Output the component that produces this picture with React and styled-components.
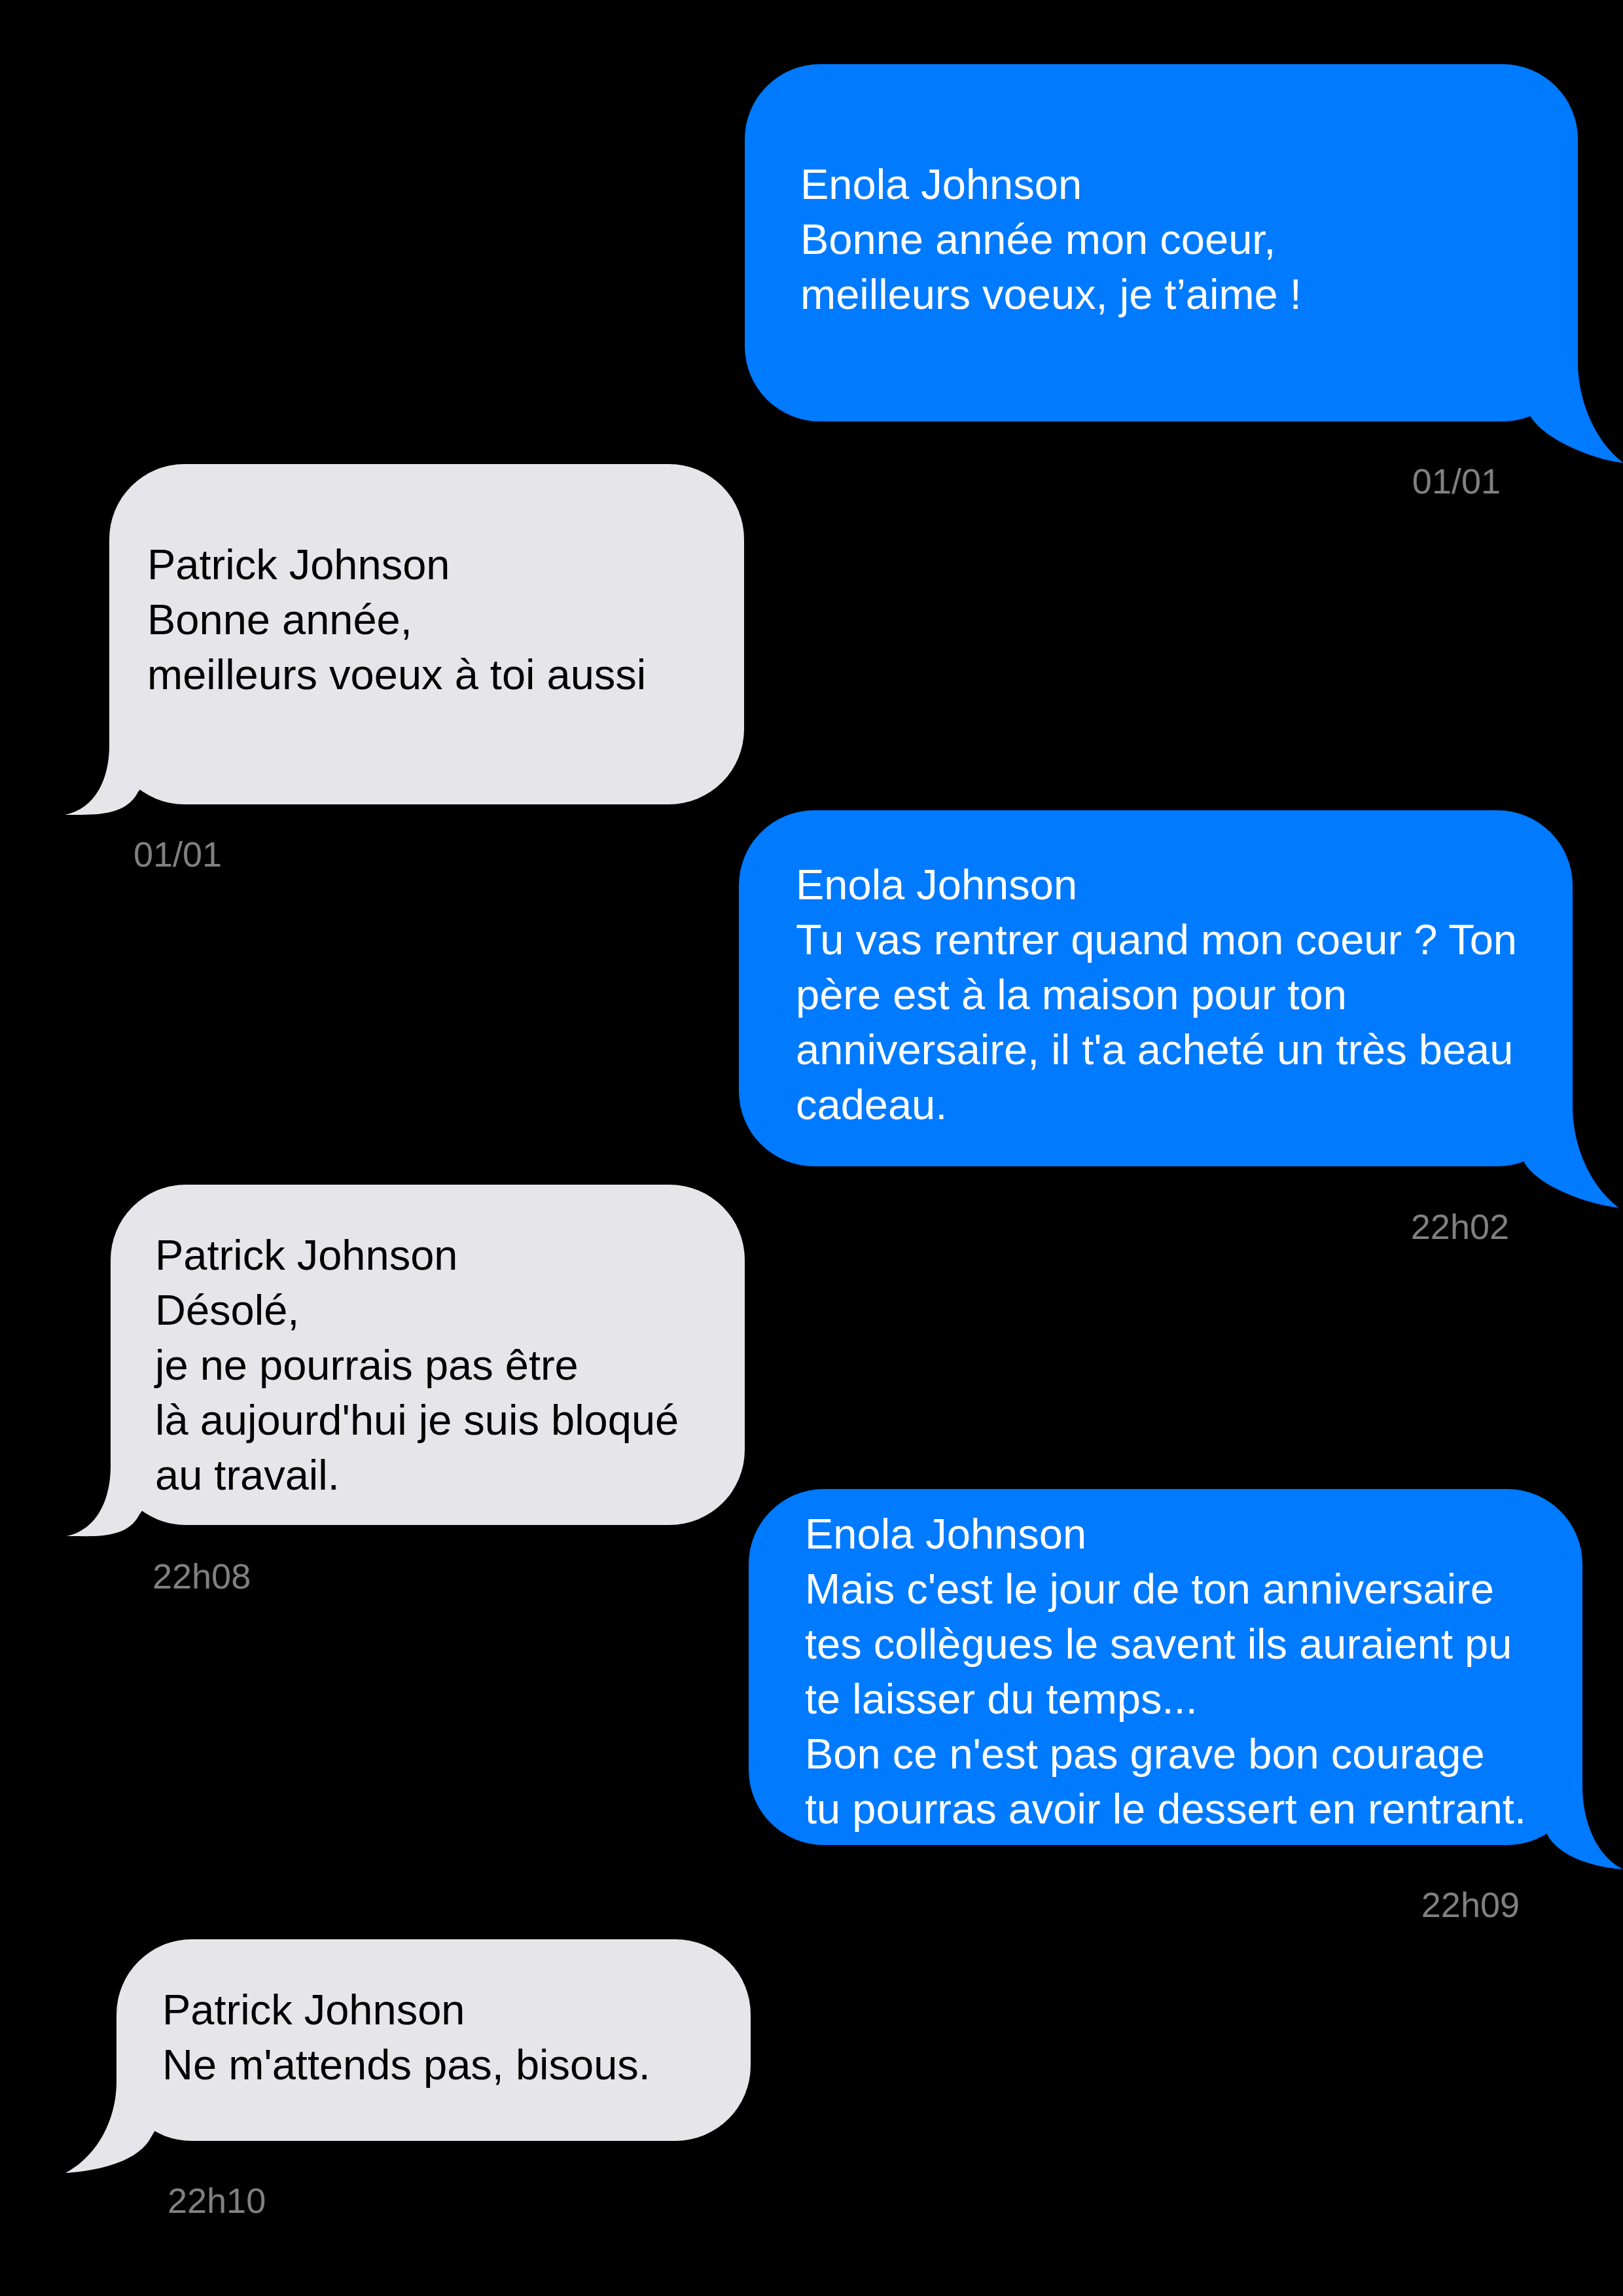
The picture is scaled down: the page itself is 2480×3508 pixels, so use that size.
import React from 'react';
import styled, { createGlobalStyle } from 'styled-components';

const GlobalStyle = createGlobalStyle`
  html, body {
    margin: 0;
    padding: 0;
    background: #000;
  }
`;

const Thread = styled.div`
  display: flex;
  flex-direction: column;
  box-sizing: border-box;
  width: 2480px;
  min-height: 3508px;
  padding-top: 98px;
  background: #000;
  font-family: "Liberation Sans", Arial, sans-serif;
`;

const Message = styled.div`
  display: flex;
  flex-direction: column;
  align-self: ${(p) => (p.$out ? 'flex-end' : 'flex-start')};
  align-items: ${(p) => (p.$out ? 'flex-end' : 'flex-start')};
  margin-top: ${(p) => p.$top}px;
  ${(p) => (p.$out ? `margin-right: ${p.$edge}px;` : `margin-left: ${p.$edge}px;`)}
`;

const Bubble = styled.div`
  position: relative;
  z-index: 0;
  box-sizing: border-box;
  width: ${(p) => p.$w}px;
  height: ${(p) => p.$h}px;
  padding: ${(p) => p.$pt}px 0 0 ${(p) => p.$pl}px;
  border-radius: 115px;
  background: ${(p) => (p.$out ? '#007aff' : '#e5e5ea')};
  color: ${(p) => (p.$out ? '#ffffff' : '#000000')};
  font-size: 65px;
  line-height: 84px;
  white-space: nowrap;
`;

const Line = styled.div``;

const Tail = styled.svg`
  position: absolute;
  z-index: -1;
  bottom: -80px;
  width: 220px;
  height: 200px;
  overflow: visible;
  ${(p) => (p.$out ? 'right: -100px;' : 'left: -100px; transform: scaleX(-1);')}
  path {
    fill: ${(p) => (p.$out ? '#007aff' : '#e5e5ea')};
  }
`;

const Time = styled.div`
  margin-top: ${(p) => p.$gap}px;
  ${(p) => (p.$out ? `margin-right: ${p.$inset}px;` : `margin-left: ${p.$inset}px;`)}
  font-size: 54px;
  line-height: 54px;
  color: #808080;
`;

// tail drawn around the bubble's bottom corner, tip and join relative to that corner
function tailPath([tx, ty], [jx, jy]) {
  const r = (n) => Math.round(n * 10) / 10;
  return [
    'M -120 -120 L 0 -120 L 0 -90',
    `C 0 -40 ${r(tx * 0.3)} ${r(ty * 0.4)} ${tx} ${ty}`,
    `C ${r(tx * 0.45)} ${r(ty * 0.95)} ${jx + 20} ${jy + 40} ${jx} ${jy}`,
    'L -120 -120 Z',
  ].join(' ');
}

const messages = [
  {
    out: true, top: 0, edge: 69, w: 1273, h: 546, pt: 142, pl: 85,
    tip: [69, 63], join: [-74, -11], gap: 64, inset: 118, time: '01/01',
    lines: ['Enola Johnson', 'Bonne année mon coeur,', 'meilleurs voeux, je t’aime !'],
  },
  {
    out: false, top: -53, edge: 167, w: 970, h: 520, pt: 112, pl: 58,
    tip: [68, 16], join: [-44, -19], gap: 49, inset: 37, time: '01/01',
    lines: ['Patrick Johnson', 'Bonne année,', 'meilleurs voeux à toi aussi'],
  },
  {
    out: true, top: -94, edge: 77, w: 1274, h: 544, pt: 72, pl: 87,
    tip: [70, 63], join: [-75, -8], gap: 65, inset: 97, time: '22h02',
    lines: [
      'Enola Johnson',
      'Tu vas rentrer quand mon coeur ? Ton',
      'père est à la maison pour ton',
      "anniversaire, il t'a acheté un très beau",
      'cadeau.',
    ],
  },
  {
    out: false, top: -91, edge: 169, w: 969, h: 520, pt: 66, pl: 68,
    tip: [67, 17], join: [-44, -16], gap: 51, inset: 64, time: '22h08',
    lines: [
      'Patrick Johnson',
      'Désolé,',
      'je ne pourrais pas être',
      "là aujourd'hui je suis bloqué",
      'au travail.',
    ],
  },
  {
    out: true, top: -160, edge: 62, w: 1274, h: 544, pt: 27, pl: 86,
    tip: [62, 37], join: [-55, -18], gap: 64, inset: 96, time: '22h09',
    lines: [
      'Enola Johnson',
      "Mais c'est le jour de ton anniversaire",
      'tes collègues le savent ils auraient pu',
      'te laisser du temps...',
      "Bon ce n'est pas grave bon courage",
      'tu pourras avoir le dessert en rentrant.',
    ],
  },
  {
    out: false, top: 26, edge: 178, w: 969, h: 308, pt: 66, pl: 70,
    tip: [78, 49], join: [-53, -6], gap: 64, inset: 78, time: '22h10',
    lines: ['Patrick Johnson', "Ne m'attends pas, bisous."],
  },
];

export default function App() {
  return (
    <>
      <GlobalStyle />
      <Thread>
        {messages.map((m, i) => (
          <Message key={i} $out={m.out} $top={m.top} $edge={m.edge}>
            <Bubble $out={m.out} $w={m.w} $h={m.h} $pt={m.pt} $pl={m.pl}>
              <Tail $out={m.out} viewBox="-120 -120 220 200">
                <path d={tailPath(m.tip, m.join)} />
              </Tail>
              {m.lines.map((line, j) => (
                <Line key={j}>{line}</Line>
              ))}
            </Bubble>
            <Time $out={m.out} $gap={m.gap} $inset={m.inset}>
              {m.time}
            </Time>
          </Message>
        ))}
      </Thread>
    </>
  );
}
